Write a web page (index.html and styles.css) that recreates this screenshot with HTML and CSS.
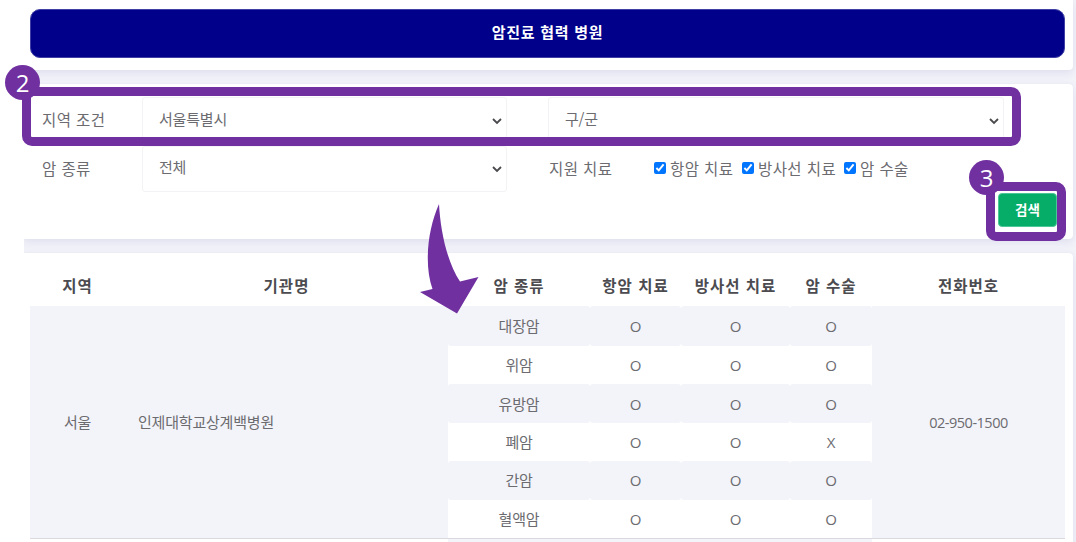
FILE: index.html
```html
<!DOCTYPE html>
<html lang="ko">
<head>
    <meta charset="UTF-8">
    <title>암진료 협력 병원</title>
    <link rel="stylesheet" href="styles.css">
</head>
<body>

    <div class="page">
        <div class="card card-title">
            <h1 class="title">암진료 협력 병원</h1>
        </div>

        <form class="card card-search">
            <div class="row">
                <span class="label">지역 조건</span>
                <div class="select"><span>서울특별시</span><svg width="10" height="7" viewBox="0 0 10 7"><path d="M1 1l4 4 4-4"/></svg></div>
                <div class="select select-gu"><span>구/군</span><svg width="10" height="7" viewBox="0 0 10 7"><path d="M1 1l4 4 4-4"/></svg></div>
            </div>
            <div class="row row-kind">
                <span class="label">암 종류</span>
                <div class="select"><span>전체</span><svg width="10" height="7" viewBox="0 0 10 7"><path d="M1 1l4 4 4-4"/></svg></div>
                <span class="label label-care">지원 치료</span>
                <div class="checks">
                    <label class="c1"><input type="checkbox" checked><span>항암 치료</span></label>
                    <label class="c2"><input type="checkbox" checked><span>방사선 치료</span></label>
                    <label><input type="checkbox" checked><span>암 수술</span></label>
                </div>
            </div>
            <button class="btn" type="button">검색</button>
        </form>

        <div class="card card-list">
            <table class="list">
                <colgroup>
                    <col class="w-area"><col class="w-name"><col class="w-kind"><col class="w-chemo"><col class="w-radio"><col class="w-surgery"><col class="w-tel">
                </colgroup>
                <thead>
                    <tr><th>지역</th><th>기관명</th><th>암 종류</th><th>항암 치료</th><th>방사선 치료</th><th>암 수술</th><th>전화번호</th></tr>
                </thead>
                <tbody>
                    <tr class="odd first">
                        <td class="span" rowspan="6">서울</td>
                        <td class="span name" rowspan="6">인제대학교상계백병원</td>
                        <td>대장암</td><td class="ox">O</td><td class="ox">O</td><td class="ox">O</td>
                        <td class="span tel" rowspan="6">02-950-1500</td>
                    </tr>
                    <tr><td>위암</td><td class="ox">O</td><td class="ox">O</td><td class="ox">O</td></tr>
                    <tr class="odd"><td>유방암</td><td class="ox">O</td><td class="ox">O</td><td class="ox">O</td></tr>
                    <tr><td>폐암</td><td class="ox">O</td><td class="ox">O</td><td class="ox">X</td></tr>
                    <tr class="odd"><td>간암</td><td class="ox">O</td><td class="ox">O</td><td class="ox">O</td></tr>
                    <tr><td>혈액암</td><td class="ox">O</td><td class="ox">O</td><td class="ox">O</td></tr>
                    <tr class="odd next"><td class="blank"></td><td class="blank"></td><td></td><td></td><td></td><td></td><td class="blank"></td></tr>
                </tbody>
            </table>
        </div>
    </div>

    <!-- guide marks -->
    <div class="mark mark-area"></div>
    <div class="mark mark-btn"></div>
    <div class="num num2">2</div>
    <div class="num num3">3</div>
    <svg class="arrow" width="60" height="112" viewBox="0 0 60 112">
        <path d="M19 0C20.500 27 27 58 40 77.500L58.500 73 37 109.500 0 88 12.500 85C4 61 7.500 26 19 0Z"/>
    </svg>

</body>
</html>
```
FILE: styles.css
```css
*{
    margin: 0;
    padding: 0;
    box-sizing: border-box;
}
body{
    position: relative;
    height: 542px;
    overflow: hidden;
    background: #fff;
    color: #6b6b70;
    font-family: "Noto Sans CJK KR", sans-serif;
    font-size: 15px;
    line-height: 20px;
}
.page{
    display: flex;
    flex-direction: column;
    gap: 14px;
    height: 542px;
    margin-left: 24px;
    padding-right: 3px;
    overflow: hidden;
    background: #f2f2f9;
}
.card{
    flex: none;
    background: #fff;
    border-radius: 4px;
    box-shadow: 0 0 1px #dcdcea, 0 3px 9px rgba(70,70,160,.1);
}
.card-title{
    height: 70px;
    padding: 9px 8px 0 6px;
    border-radius: 0 0 4px 0;
}
.title{
    height: 49px;
    background: #00008b;
    border: 1px solid #4040a4;
    border-radius: 10px;
    color: #fff;
    font-size: 15px;
    font-weight: bold;
    letter-spacing: .7px;
    line-height: 44px;
    text-align: center;
}
.card-search{
    display: flex;
    flex-direction: column;
    height: 155px;
    padding: 13px 16px 0 18px;
    border-radius: 0 4px 4px 0;
}
.row{
    display: flex;
    height: 49px;
}
.row-kind{
    height: 46px;
}
.label{
    width: 100px;
    padding-top: 12px;
    font-size: 15.5px;
    letter-spacing: .4px;
}
.select{
    display: flex;
    justify-content: space-between;
    width: 365px;
    height: 45px;
    padding: 11px 4px 0 16px;
    border: 1px solid #f3f3f5;
    border-radius: 3px;
    letter-spacing: -.2px;
}
.select svg{
    margin-top: 9px;
    fill: none;
    stroke: #4a4a4e;
    stroke-width: 1.8;
}
.row-kind .select{
    height: 46px;
    padding-top: 10px;
}
.select-gu{
    width: 456px;
    margin-left: 41px;
}
.label-care{
    width: 105px;
    margin-left: 42px;
}
.checks{
    display: flex;
    padding-top: 12px;
    font-size: 15.5px;
    letter-spacing: .4px;
}
.checks label{
    display: flex;
    white-space: nowrap;
}
.checks .c1{
    width: 88px;
}
.checks .c2{
    width: 102px;
}
.checks input{
    width: 12px;
    height: 12px;
    margin: 4px 4px 0 0;
    accent-color: #0075ff;
}
.btn{
    align-self: flex-end;
    width: 59px;
    height: 34px;
    margin-top: 1px;
    padding-bottom: 2px;
    background: #05ad68;
    border: 1px solid #4cc697;
    border-radius: 4px;
    color: #fff;
    font-family: inherit;
    font-size: 13.5px;
    font-weight: bold;
}
.card-list{
    height: 320px;
    padding: 12px 8px 0 6px;
    border-radius: 0 4px 0 0;
}
.list{
    width: 1035px;
    table-layout: fixed;
    border-collapse: separate;
    border-spacing: 0;
}
.w-area{ width: 95px; }
.w-name{ width: 323px; }
.w-kind{ width: 142px; }
.w-chemo{ width: 91px; }
.w-radio{ width: 109px; }
.w-surgery{ width: 82px; }
.w-tel{ width: 193px; }
.list th{
    height: 41px;
    padding-bottom: 2px;
    color: #4b4b50;
    font-size: 15.5px;
    font-weight: bold;
    letter-spacing: 1px;
    white-space: nowrap;
}
.list td{
    height: 38.4px;
    border-radius: 3px;
    text-align: center;
    letter-spacing: -.2px;
}
.list .first td{
    height: 40px;
}
.list .odd td,.list .span{
    background: #f3f4f9;
}
.list .span{
    border-radius: 0;
}
.list .next td{
    height: 10px;
    border-top: 1px solid #d9d9de;
    border-radius: 0;
}
.list .next .blank{
    background: #fff;
}
.list .name{
    padding-left: 13px;
    text-align: left;
}
.list .ox,.list .tel{
    font-family: "Open Sans", sans-serif;
    font-size: 15px;
}
.list .tel{
    padding-top: 2px;
    font-size: 14.5px;
    letter-spacing: -.5px;
}
.mark{
    position: absolute;
    border: 9px solid #7030a0;
    border-radius: 10px;
}
.mark-area{
    left: 22px;
    top: 87px;
    width: 999px;
    height: 59px;
}
.mark-btn{
    left: 986px;
    top: 182px;
    width: 80px;
    height: 59px;
}
.num{
    position: absolute;
    width: 35px;
    height: 35px;
    border-radius: 50%;
    background: #7030a0;
    color: #fff;
    font-family: "Open Sans", sans-serif;
    font-size: 24px;
    line-height: 36px;
    text-align: center;
}
.num2{
    left: 5px;
    top: 65px;
}
.num3{
    left: 969px;
    top: 160px;
}
.arrow{
    position: absolute;
    left: 420px;
    top: 204px;
    fill: #7030a0;
}
```
